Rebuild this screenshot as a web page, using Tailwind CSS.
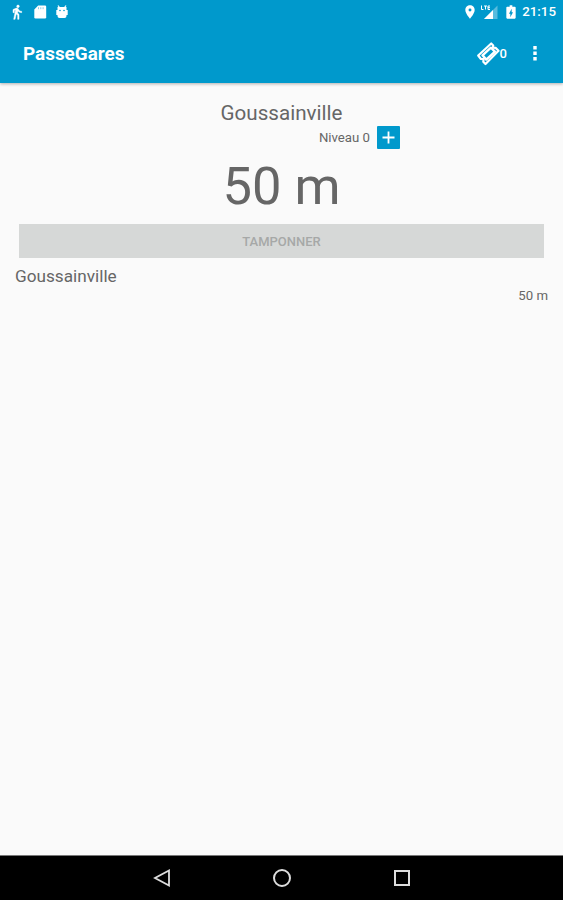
<!DOCTYPE html>
<html lang="fr">
  <head>
    <meta charset="UTF-8" />
    <meta name="viewport" content="width=device-width, initial-scale=1.0" />
    <title>PasseGares</title>
    <script src="https://cdn.jsdelivr.net/npm/@tailwindcss/browser@4"></script>
  </head>
  <body class="bg-[#fafafa] font-[Roboto,sans-serif] text-[#666]">
    <div class="flex h-[900px] w-[563px] flex-col overflow-hidden">
      <header class="h-[83px] shrink-0 bg-[#0099cc] text-white shadow-[0_1px_3px_rgba(0,0,0,0.3)]">
        <!-- status bar -->
        <div class="flex h-6 items-center justify-between pr-[7px] pl-[9px]">
          <div class="flex items-center">
            <svg class="h-4 w-4" viewBox="0 0 24 24" fill="currentColor" stroke="currentColor" stroke-width=".7">
              <path d="M13.500 5.500c1.100 0 2-.9 2-2s-.9-2-2-2-2 .9-2 2 .9 2 2 2zM9.800 8.900L7 23h2.100l1.800-8 2.100 2v6h2v-7.500l-2.100-2 .6-3C14.800 12 16.800 13 19 13v-2c-1.900 0-3.500-1-4.300-2.400l-1-1.600c-.4-.6-1-1-1.700-1-.3 0-.5.1-.8.1L6 8.300V13h2V9.600l1.800-.7" />
            </svg>
            <svg class="ml-[7px] h-4 w-4" viewBox="0 0 16 16">
              <path d="M6.200 1.500H13a1.200 1.200 0 0 1 1.200 1.200v10.600a1.200 1.200 0 0 1-1.200 1.200H3.500a1.200 1.200 0 0 1-1.200-1.200V5.500z" fill="currentColor" />
              <path d="M6.500 3.200v2M8.800 3.200v2M11.100 3.200v2" stroke="#8ccfe8" stroke-width="1" />
            </svg>
            <svg class="ml-[6px] h-4 w-4" viewBox="0 0 16 16">
              <path d="M4 1.500l1.500 2M12 1.500l-1.500 2" stroke="currentColor" stroke-width="1.200" />
              <path d="M3.500 3h9v3h1.200v5h-1.200v1a2 2 0 0 1-2 2h-5a2 2 0 0 1-2-2v-1H2.300V6h1.200z" fill="currentColor" />
              <circle cx="6" cy="6.500" r=".8" fill="#0099cc" />
              <circle cx="10" cy="6.500" r=".8" fill="#0099cc" />
            </svg>
          </div>
          <div class="flex items-center">
            <svg class="h-4 w-4" viewBox="0 0 24 24" fill="currentColor">
              <path d="M12 2C8.100 2 5 5.100 5 9c0 5.300 7 13 7 13s7-7.700 7-13c0-3.900-3.100-7-7-7zm0 9.200a2.200 2.200 0 0 1 0-4.400 2.200 2.200 0 0 1 0 4.400z" />
            </svg>
            <svg class="ml-[2px] h-4 w-[18px]" viewBox="0 0 18 16">
              <path d="M17.500 1.500V15H4z" fill="#fff" fill-opacity=".35" />
              <path d="M13 6v9H4z" fill="currentColor" />
              <path d="M1.500 1.500v4h2M4 2h3M5.500 2v3.500M10 2H8v3.500h2M8 3.700h2" fill="none" stroke="currentColor" stroke-width="1" />
            </svg>
            <svg class="ml-[5px] h-4 w-4" viewBox="0 0 24 24" fill="currentColor">
              <path d="M15.700 4H14V2h-4v2H8.300C7.600 4 5 4 5 5.300v15.400C5 21.400 5.600 22 6.300 22h11.400c.7 0 1.300-.6 1.300-1.300V5.300C19 4 16.500 4 15.700 4zM11 20v-5.500H9L13 7v5.500h2L11 20z" />
            </svg>
            <span class="ml-[3px] text-[13.300px] leading-6 font-medium">21:15</span>
          </div>
        </div>

        <!-- action bar -->
        <div class="flex h-[59px] items-center justify-between pr-[18px] pl-[23px]">
          <h1 class="text-[18.900px] leading-6 font-bold">PasseGares</h1>
          <div class="flex items-center">
            <svg class="h-6 w-6" viewBox="0 0 24 24" fill="none" stroke="currentColor" stroke-linejoin="round">
              <path d="M1.200 13.500L14.200 1.500l2 2-.2 2.200 2.600.2 2.900 2.800L8.500 22l-2.200-2.300.3-2.500-2.700-.2z" stroke-width="2.200" />
              <path d="M5.500 13.300L13.900 5.700l4 3.900-8.600 8z" stroke-width="2.400" />
            </svg>
            <span class="-ml-px text-[13px] leading-4 font-medium">0</span>
            <svg class="ml-[18px] h-5 w-5" viewBox="0 0 20 20" fill="currentColor">
              <path d="M8.300 2.100h3.400v3.400H8.300zM8.300 7.600h3.400V11H8.300zM8.300 13.100h3.400v3.400H8.300z" />
            </svg>
          </div>
        </div>
      </header>

      <main class="flex-1 pt-[18px]">
        <h2 class="text-center text-[20.600px] leading-6">Goussainville</h2>
        <div class="flex items-center justify-end pr-[163px]">
          <span class="pt-px text-[13.200px] leading-6">Niveau 0</span>
          <button class="ml-[7px] flex h-[23px] w-[23px] items-center justify-center rounded-[1px] bg-[#0099cc]">
            <svg class="h-[13px] w-[13px]" viewBox="0 0 13 13" stroke="#fff" stroke-width="1.800">
              <path d="M6.500 .5v12M.5 6.500h12" />
            </svg>
          </button>
        </div>
        <p class="mt-1 text-center text-[52.500px] leading-[64px]">50 m</p>
        <button class="mx-auto mt-[6px] block h-[34px] w-[525px] bg-[#d6d8d7] pt-0.5 text-[13px] font-medium text-[#a6a8a7]">TAMPONNER</button>
        <div class="pt-2 pr-[15px] pl-[15px]">
          <div class="text-[17.200px] leading-5">Goussainville</div>
          <div class="text-right text-[13.200px] leading-5">50 m</div>
        </div>
      </main>

      <!-- navigation bar -->
      <nav class="flex h-[45px] shrink-0 items-center justify-center gap-[100px] border-t border-[#777] bg-black text-[#ddd]">
        <svg class="h-5 w-5" viewBox="0 0 20 20" fill="none" stroke="currentColor" stroke-width="1.800">
          <path d="M17 2.500v15L3 10z" />
        </svg>
        <svg class="h-5 w-5" viewBox="0 0 20 20" fill="none" stroke="currentColor" stroke-width="2">
          <circle cx="10" cy="10" r="8" />
        </svg>
        <svg class="h-5 w-5" viewBox="0 0 20 20" fill="none" stroke="currentColor" stroke-width="2">
          <rect x="3" y="3" width="14" height="14" />
        </svg>
      </nav>
    </div>
  </body>
</html>
